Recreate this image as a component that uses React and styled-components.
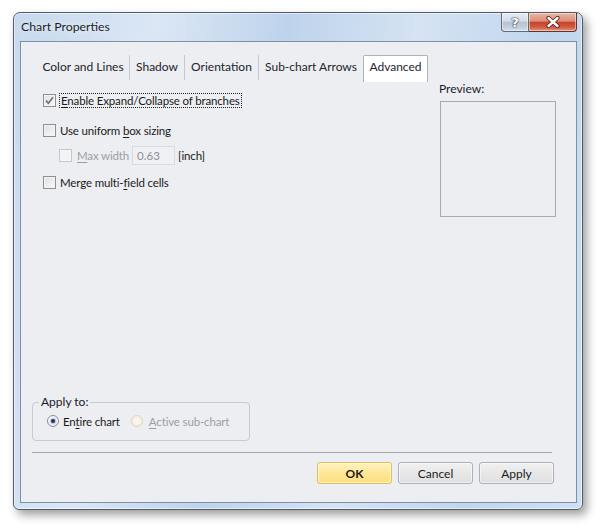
import React from "react";
import styled, { createGlobalStyle } from "styled-components";

const GlobalStyle = createGlobalStyle`
  html, body { margin: 0; padding: 0; background: #ffffff; }
  body {
    font-family: Lato, "Noto Sans", sans-serif;
    font-size: 12px;
    color: #1a1a1a;
  }
  * { box-sizing: border-box; }
`;

const Page = styled.div`
  width: 601px;
  height: 529px;
  padding: 12px 0 0 13px;
`;

const Window = styled.div`
  width: 570px;
  height: 498px;
  border: 1px solid #525c69;
  border-radius: 7px 7px 6px 6px;
  background: linear-gradient(100deg, #c6d9ee 0%, #dbe7f5 22%, #bed3eb 42%, #d5e3f3 62%, #c1d6ed 82%, #cfe0f2 100%);
  box-shadow: 4px 5px 10px rgba(0, 0, 0, 0.38), inset 0 0 0 1px rgba(255, 255, 255, 0.55);
  display: flex;
  flex-direction: column;
`;

const TitleBar = styled.div`
  height: 28px;
  flex: none;
  display: flex;
  align-items: flex-start;
  justify-content: space-between;
  padding: 0 5px 0 7px;
`;

const Title = styled.div`
  padding-top: 6px;
  line-height: 16px;
  font-size: 12.3px;
  color: #1e1e1e;
  text-shadow: 0 0 6px rgba(255, 255, 255, 0.9);
`;

const CaptionButtons = styled.div`
  display: flex;
  height: 19px;
`;

const CaptionButton = styled.div`
  width: ${(p) => p.$w}px;
  height: 19px;
  display: flex;
  align-items: center;
  justify-content: center;
  border: 1px solid ${(p) => (p.$close ? "#6a3026" : "#5f6b7a")};
  border-top: none;
  ${(p) => (p.$close ? "border-left: none;" : "")}
  border-radius: ${(p) => (p.$close ? "0 0 4px 0" : "0 0 0 4px")};
  background: ${(p) =>
    p.$close
      ? "linear-gradient(#eab6a8 0%, #dc8d76 45%, #c7442b 52%, #cf5a40 78%, #e29a83 100%)"
      : "linear-gradient(#e6ecf3 0%, #d2dce7 45%, #b4c2d2 52%, #c3d0de 80%, #d6e0ea 100%)"};
  box-shadow: inset 0 0 0 1px rgba(255, 255, 255, 0.45);
`;

const HelpGlyph = styled.span`
  font-family: "DejaVu Sans", sans-serif;
  font-weight: bold;
  font-size: 13px;
  line-height: 13px;
  color: #ffffff;
  text-shadow: 0 0 1px #3d4756, 0 0 1px #3d4756, 0 0 2px #3d4756;
  margin-top: 1px;
`;

const Client = styled.div`
  flex: 1;
  min-height: 0;
  margin: 0 5px 6px 6px;
  border: 1px solid #7e90a6;
  background: #eceef1;
  display: flex;
  flex-direction: column;
`;

const TabStrip = styled.div`
  display: flex;
  align-items: flex-start;
  margin: 13px 0 0 16px;
  height: 27px;
  flex: none;
`;

const Tab = styled.div`
  width: ${(p) => p.$w}px;
  height: ${(p) => (p.$active ? 27 : 25)}px;
  display: flex;
  justify-content: center;
  line-height: 16px;
  padding-top: ${(p) => (p.$active ? 3 : 4)}px;
  color: #23232e;
  white-space: nowrap;
  ${(p) =>
    p.$active
      ? `background: #ffffff;
         border: 1px solid #aeb3ba;
         border-bottom: none;
         border-radius: 2px 2px 0 0;`
      : p.$first
      ? ""
      : "border-left: 1px solid #c6cad0;"}
`;

const Body = styled.div`
  display: flex;
  justify-content: space-between;
  padding: 0 20px 0 22px;
  flex: none;
`;

const Options = styled.div`
  display: flex;
  flex-direction: column;
`;

const Row = styled.div`
  display: flex;
  align-items: center;
  height: 18px;
  margin-top: ${(p) => p.$mt}px;
  padding-left: ${(p) => p.$indent || 0}px;
`;

const CheckBoxBox = styled.span`
  width: 13px;
  height: 13px;
  flex: none;
  display: flex;
  align-items: center;
  justify-content: center;
  border: 1px solid ${(p) => (p.$disabled ? "#c4c6c9" : "#8e8f8f")};
  background: ${(p) => (p.$disabled ? "#f2f3f4" : "linear-gradient(135deg, #dedfe1, #f9f9fa)")};
  box-shadow: inset 0 0 0 1px ${(p) => (p.$disabled ? "#f6f6f7" : "#f4f4f5")};
`;

const Label = styled.span`
  margin-left: ${(p) => p.$ml}px;
  line-height: 13px;
  font-size: 11.5px;
  letter-spacing: -0.15px;
  color: ${(p) => (p.$disabled ? "#9c9ea2" : "#1a1a1a")};
  white-space: nowrap;
  ${(p) => (p.$focus ? "border: 1px dotted #222; padding: 0 1px;" : "")}
`;

const Key = styled.span`
  text-decoration: underline;
  text-underline-offset: 2px;
`;

const NumberBox = styled.div`
  width: 43px;
  height: 19px;
  margin-left: 3px;
  border: 1px solid #d8dbdf;
  background: #eef0f3;
  color: #8d9095;
  padding-left: 4px;
  line-height: 17px;
  font-size: 11.5px;
`;

const PreviewColumn = styled.div`
  width: 116px;
  display: flex;
  flex-direction: column;
`;

const PreviewLabel = styled.div`
  line-height: 14px;
  margin-left: -1px;
  color: #1a1a2a;
`;

const PreviewBox = styled.div`
  margin-top: 5px;
  width: 116px;
  height: 116px;
  border: 1px solid #a7acb2;
  background: #eceef1;
`;

const Footer = styled.div`
  margin-top: auto;
  padding: 0 22px 18px 11px;
  display: flex;
  flex-direction: column;
`;

const GroupBox = styled.fieldset`
  width: 218px;
  margin: 0;
  padding: 4px 6px 11px;
  border: 1px solid #c6cbd2;
  border-radius: 4px;
`;

const Legend = styled.legend`
  padding: 0 2px;
  line-height: 14px;
  color: #1a1a2a;
`;

const RadioRow = styled.div`
  display: flex;
  align-items: center;
  height: 16px;
  padding-left: 8px;
`;

const Radio = styled.span`
  width: 12px;
  height: 12px;
  flex: none;
  margin-left: ${(p) => p.$ml || 0}px;
  border-radius: 50%;
  display: flex;
  align-items: center;
  justify-content: center;
  border: 1px solid ${(p) => (p.$disabled ? "#e2d5c1" : "#8c8f94")};
  background: ${(p) =>
    p.$disabled
      ? "radial-gradient(circle at 50% 50%, #fbf6ee 30%, #f1e6d4 100%)"
      : "radial-gradient(circle at 40% 40%, #ffffff 20%, #dcdee2 100%)"};
  &::after {
    content: "";
    display: ${(p) => (p.$checked ? "block" : "none")};
    width: 4px;
    height: 4px;
    border-radius: 50%;
    background: #1f3566;
    box-shadow: 0 0 1px 1px rgba(60, 90, 150, 0.35);
  }
`;

const Divider = styled.div`
  height: 1px;
  width: 520px;
  margin-top: 11px;
  background: #a4a8ad;
`;

const ButtonRow = styled.div`
  display: flex;
  justify-content: flex-end;
  gap: 6px;
  margin-top: 9px;
`;

const Button = styled.div`
  width: 75px;
  height: 22px;
  display: flex;
  align-items: center;
  justify-content: center;
  border-radius: 3px;
  border: 1px solid ${(p) => (p.$primary ? "#e2bd58" : "#adb0b4")};
  background: ${(p) =>
    p.$primary
      ? "linear-gradient(#fff2c2 0%, #fde796 50%, #fce07f 100%)"
      : "linear-gradient(#f0f0f0 0%, #e7e7e7 50%, #e0e0e0 100%)"};
  box-shadow: inset 0 0 0 1px rgba(255, 255, 255, 0.55);
  font-weight: ${(p) => (p.$primary ? "bold" : "normal")};
  color: #1a1a1a;
`;

function CheckBox({ checked, disabled }) {
  return (
    <CheckBoxBox $disabled={disabled}>
      {checked && (
        <svg width="9" height="9" viewBox="0 0 9 9">
          <path d="M1 4.6 L3.4 7.2 L8 1.2" fill="none" stroke="#6c7079" strokeWidth="1.6" />
        </svg>
      )}
    </CheckBoxBox>
  );
}

const tabs = [
  { label: "Color and Lines", w: 92 },
  { label: "Shadow", w: 55 },
  { label: "Orientation", w: 74 },
  { label: "Sub-chart Arrows", w: 105 },
  { label: "Advanced", w: 65, active: true },
];

export default function App() {
  return (
    <Page>
      <GlobalStyle />
      <Window>
        <TitleBar>
          <Title>Chart Properties</Title>
          <CaptionButtons>
            <CaptionButton $w={28}>
              <HelpGlyph>?</HelpGlyph>
            </CaptionButton>
            <CaptionButton $w={48} $close>
              <svg width="14" height="12" viewBox="0 0 14 12">
                <path d="M2.5 2 L11.5 10 M11.5 2 L2.5 10" stroke="#5a2219" strokeWidth="4.2" strokeLinecap="round" />
                <path d="M2.5 2 L11.5 10 M11.5 2 L2.5 10" stroke="#ffffff" strokeWidth="2.4" strokeLinecap="round" />
              </svg>
            </CaptionButton>
          </CaptionButtons>
        </TitleBar>
        <Client>
          <TabStrip>
            {tabs.map((t, i) => (
              <Tab key={t.label} $w={t.w} $active={t.active} $first={i === 0}>
                {t.label}
              </Tab>
            ))}
          </TabStrip>
          <Body>
            <Options>
              <Row $mt={9}>
                <CheckBox checked />
                <Label $ml={3} $focus>
                  <Key>E</Key>nable Expand/Collapse of branches
                </Label>
              </Row>
              <Row $mt={12}>
                <CheckBox />
                <Label $ml={4}>
                  Use uniform <Key>b</Key>ox sizing
                </Label>
              </Row>
              <Row $mt={7} $indent={16}>
                <CheckBox disabled />
                <Label $ml={5} $disabled>
                  <Key>M</Key>ax width
                </Label>
                <NumberBox>0.63</NumberBox>
                <Label $ml={3}>[inch]</Label>
              </Row>
              <Row $mt={9}>
                <CheckBox />
                <Label $ml={4}>
                  Merge multi-<Key>f</Key>ield cells
                </Label>
              </Row>
            </Options>
            <PreviewColumn>
              <PreviewLabel>Preview:</PreviewLabel>
              <PreviewBox />
            </PreviewColumn>
          </Body>
          <Footer>
            <GroupBox>
              <Legend>Apply to:</Legend>
              <RadioRow>
                <Radio $checked />
                <Label $ml={4}>
                  En<Key>t</Key>ire chart
                </Label>
                <Radio $ml={11} $disabled />
                <Label $ml={6} $disabled>
                  <Key>A</Key>ctive sub-chart
                </Label>
              </RadioRow>
            </GroupBox>
            <Divider />
            <ButtonRow>
              <Button $primary>OK</Button>
              <Button>Cancel</Button>
              <Button>Apply</Button>
            </ButtonRow>
          </Footer>
        </Client>
      </Window>
    </Page>
  );
}
